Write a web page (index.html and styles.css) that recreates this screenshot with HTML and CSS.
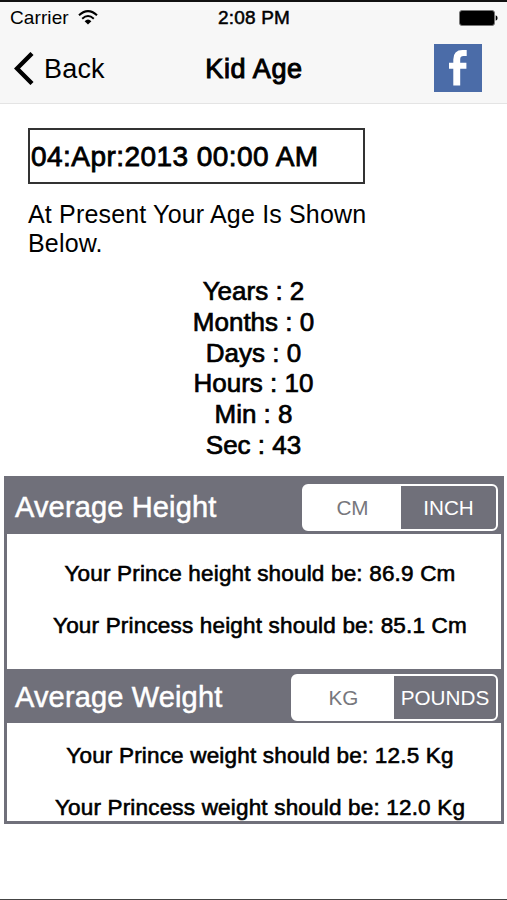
FILE: index.html
```
<!DOCTYPE html>
<html lang="en">
<head>
    <meta charset="UTF-8">
    <meta name="viewport" content="width=device-width, initial-scale=1.0">
    <title>Kid Age</title>
    <link rel="stylesheet" href="styles.css">
</head>
<body>
    <div class="screen">
        <header class="top">
            <div class="status-bar">
                <div class="carrier">
                    <span>Carrier</span>
                    <svg class="wifi" viewBox="0 0 20 15" width="20" height="15">
                        <path d="M1 5.2 Q10 -3 19 5.2" fill="none" stroke="#000" stroke-width="2"/>
                        <path d="M4.2 8.7 Q10 3.4 15.8 8.7" fill="none" stroke="#000" stroke-width="2"/>
                        <path d="M6.6 11.2 Q10 8 13.4 11.2 L10 14.6 Z" fill="#000"/>
                    </svg>
                </div>
                <div class="clock">2:08 PM</div>
                <svg class="battery" viewBox="0 0 39 16" width="39" height="16">
                    <rect x="0.5" y="0.5" width="35" height="15" rx="2.5" fill="#000" stroke="#777"/>
                    <path d="M36.7 5.2 Q38.6 6 38.6 8 Q38.6 10 36.7 10.8 Z" fill="#000"/>
                </svg>
            </div>
            <nav class="nav-bar">
                <a class="back">
                    <svg viewBox="0 0 20 33" width="20" height="33">
                        <path d="M18 1.5 L3 16.5 L18 31.5" fill="none" stroke="#000" stroke-width="4.4"/>
                    </svg>
                    <span>Back</span>
                </a>
                <h1 class="title">Kid Age</h1>
                <svg class="facebook" viewBox="0 0 48 48" width="48" height="48">
                    <rect width="48" height="48" fill="#4b6ca8"/>
                    <path d="M19.3 41.5 V24.8 H15 V18.8 H19.3 V15.5 Q19.3 6 28.5 6 H32.7 V12 H29.5 Q26.2 12 26.2 15.3 V18.8 H32.4 V24.8 H26.2 V41.5 Z" fill="#fff"/>
                </svg>
            </nav>
        </header>

        <main>
            <div class="date-field">04:Apr:2013 00:00 AM</div>
            <p class="note">At Present Your Age Is Shown Below.</p>
            <ul class="age">
                <li>Years : 2</li>
                <li>Months : 0</li>
                <li>Days : 0</li>
                <li>Hours : 10</li>
                <li>Min : 8</li>
                <li>Sec : 43</li>
            </ul>

            <div class="panel">
                <div class="panel-head height-head">
                    <h2>Average Height</h2>
                    <div class="segment height-segment">
                        <span class="active">CM</span>
                        <span>INCH</span>
                    </div>
                </div>
                <div class="panel-body height-body">
                    <p>Your Prince height should be: 86.9 Cm</p>
                    <p>Your Princess height should be: 85.1 Cm</p>
                </div>
                <div class="panel-head weight-head">
                    <h2>Average Weight</h2>
                    <div class="segment weight-segment">
                        <span class="active">KG</span>
                        <span>POUNDS</span>
                    </div>
                </div>
                <div class="panel-body weight-body">
                    <p>Your Prince weight should be: 12.5 Kg</p>
                    <p>Your Princess weight should be: 12.0 Kg</p>
                </div>
            </div>
        </main>
    </div>
</body>
</html>
```
FILE: styles.css
```
* {
    box-sizing: border-box;
}
body {
    margin: 0;
    font-family: "Liberation Sans", Arial, sans-serif;
    color: #000;
    background: #fff;
}
h1, h2, p, ul {
    margin: 0;
    padding: 0;
    font-weight: normal;
}
.screen {
    height: 900px;
    border-top: 2px solid #111;
    border-bottom: 1px solid #444;
    overflow: hidden;
}
.top {
    height: 102px;
    background: #f7f7f7;
    border-bottom: 1px solid #e4e4e4;
}

/* status bar */
.status-bar {
    display: grid;
    grid-template-columns: 1fr auto 1fr;
    align-items: center;
    height: 32px;
    padding: 0 9px 0 10px;
    font-size: 19px;
}
.carrier {
    display: flex;
    align-items: center;
    gap: 9px;
    letter-spacing: 0.1px;
}
.wifi {
    margin-bottom: 2px;
}
.clock {
    -webkit-text-stroke: 0.5px #000;
    letter-spacing: 0.2px;
}
.battery {
    justify-self: end;
}

/* navigation */
.nav-bar {
    display: grid;
    grid-template-columns: 1fr auto 1fr;
    align-items: center;
    height: 68px;
    padding: 0 25px 0 14px;
}
.back {
    display: flex;
    align-items: center;
    gap: 10px;
    font-size: 27px;
    letter-spacing: 0.2px;
}
.back span {
    padding-top: 2px;
}
.title {
    padding: 2px 0 0 12px;
    font-size: 27px;
    -webkit-text-stroke: 1px #000;
    letter-spacing: 0.6px;
}
.facebook {
    justify-self: end;
}

/* age */
.date-field {
    width: 337px;
    height: 56px;
    margin: 24px 0 0 28px;
    padding-left: 1px;
    border: 2px solid #333;
    font-size: 28px;
    line-height: 53px;
    letter-spacing: 0.45px;
    -webkit-text-stroke: 0.8px #000;
}
.note {
    width: 350px;
    margin: 16px 0 0 28px;
    font-size: 25px;
    line-height: 29px;
    letter-spacing: 0.17px;
}
.age {
    margin-top: 18px;
    list-style: none;
    text-align: center;
    font-size: 26px;
    line-height: 30.8px;
    -webkit-text-stroke: 0.7px #000;
}

/* averages */
.panel {
    width: 500px;
    height: 348px;
    margin: 15px 0 0 4px;
    border: 3px solid #70707a;
    font-size: 22.5px;
    overflow: hidden;
}
.panel-head {
    display: flex;
    justify-content: space-between;
    align-items: center;
    padding: 3px 3px 0 8px;
    background: #70707a;
    color: #fff;
}
.panel-head h2 {
    font-size: 29px;
    letter-spacing: 0.15px;
    -webkit-text-stroke: 0.5px #fff;
}
.height-head {
    height: 55px;
}
.weight-head {
    height: 54px;
}
.segment {
    display: grid;
    height: 47px;
    border: 2px solid #fff;
    border-radius: 6px;
    font-size: 20.7px;
    line-height: 43px;
    text-align: center;
}
.segment .active {
    background: #fff;
    color: #77777c;
}
.height-segment {
    width: 196px;
    grid-template-columns: 97px 95px;
}
.weight-segment {
    width: 207px;
    grid-template-columns: 101px 102px;
}
.panel-body {
    padding-left: 12px;
    text-align: center;
    line-height: 52.5px;
    letter-spacing: 0.18px;
    -webkit-text-stroke: 0.6px #000;
}
.height-body {
    height: 135px;
    padding-top: 14px;
}
.weight-body {
    padding-top: 7px;
}
```
